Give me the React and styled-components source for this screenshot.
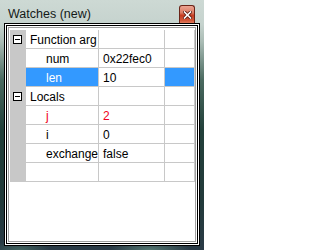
import React from "react";
import styled, { createGlobalStyle } from "styled-components";

const Global = createGlobalStyle`
  html, body { margin: 0; padding: 0; background: #fff; }
  body { font-family: "Liberation Sans", Arial, sans-serif; }
`;

const Window = styled.div`
  width: 204px;
  height: 250px;
  box-sizing: border-box;
  display: flex;
  flex-direction: column;
  background:
    radial-gradient(ellipse 40px 10px at 150px 250px, rgba(120, 170, 150, 0.55), transparent),
    radial-gradient(ellipse 30px 10px at 20px 250px, rgba(90, 140, 120, 0.5), transparent),
    linear-gradient(180deg, #cdd9d4 0px, #c6d3ce 24px, #a9bbb4 42px, #4a6a60 80px, #22403a 130px, #223a3a 200px, #2a3a46 250px);
  font-family: "Liberation Sans", Arial, sans-serif;
`;

const TitleBar = styled.div`
  height: 23px;
  flex: none;
  display: flex;
  align-items: flex-start;
  justify-content: space-between;
  padding: 0 9px 0 8px;
`;

const Title = styled.div`
  padding-top: 7px;
  font-size: 12.5px;
  line-height: 14px;
  color: #141a18;
  white-space: nowrap;
`;

const CloseButton = styled.div`
  margin-top: 5px;
  width: 16px;
  height: 18px;
  box-sizing: border-box;
  border: 1px solid #6a2418;
  border-bottom: none;
  border-radius: 3px 3px 0 0;
  background: linear-gradient(180deg, #eba392 0%, #dc7c64 40%, #c63d22 55%, #d2583a 85%, #e07a5c 100%);
  display: flex;
  align-items: center;
  justify-content: center;
`;

const Body = styled.div`
  flex: 1;
  margin: 0 4px 4px 4px;
  border: 1px solid #000;
  padding: 1px;
  background: #fff;
  display: flex;
`;

const InnerFrame = styled.div`
  flex: 1;
  border: 1px solid #000;
  padding: 1px;
  background: #fff;
  display: flex;
`;

const Content = styled.div`
  flex: 1;
  border: 1px solid #a0a0a0;
  background: #fff;
  padding: 2px 0 0 1px;
`;

const Row = styled.div`
  display: grid;
  grid-template-columns: 16px 73px 66px 30px;
  height: 19px;
`;

const Gutter = styled.div`
  background: #c8c8c8;
  display: flex;
  justify-content: center;
  align-items: flex-start;
  padding-top: 5px;
  padding-right: 1px;
  box-sizing: border-box;
`;

const Expander = styled.div`
  width: 9px;
  height: 9px;
  box-sizing: border-box;
  border: 1px solid #000;
  background: #fff;
  display: flex;
  align-items: center;
  justify-content: center;
`;

const Minus = styled.div`
  width: 5px;
  height: 1px;
  background: #000;
`;

const Cell = styled.div`
  box-sizing: border-box;
  height: 19px;
  border-right: 1px solid #c8c8c8;
  border-bottom: 1px solid #c8c8c8;
  padding: 1px 0 0 ${(p) => p.$indent || 4}px;
  line-height: 18px;
  font-size: 12px;
  white-space: nowrap;
  overflow: hidden;
  color: ${(p) => (p.$selected ? "#fff" : p.$changed ? "#f00020" : "#000")};
  background: ${(p) => (p.$selected ? "#3399ff" : "#fff")};
`;

const rows = [
  { group: true, name: "Function arg" },
  { name: "num", value: "0x22fec0" },
  { name: "len", value: "10", selected: true },
  { group: true, name: "Locals" },
  { name: "j", value: "2", changed: true },
  { name: "i", value: "0" },
  { name: "exchange", value: "false" },
  { name: "" , value: "" },
];

function CloseGlyph() {
  return (
    <svg width="9" height="8" viewBox="0 0 9 8">
      <path d="M1.5 1 L7.5 7 M7.5 1 L1.5 7" stroke="#5a1a10" strokeWidth="3.2" strokeLinecap="square" />
      <path d="M1.5 1 L7.5 7 M7.5 1 L1.5 7" stroke="#ffffff" strokeWidth="1.6" strokeLinecap="square" />
    </svg>
  );
}

export default function App() {
  return (
    <>
      <Global />
      <Window>
        <TitleBar>
          <Title>Watches (new)</Title>
          <CloseButton>
            <CloseGlyph />
          </CloseButton>
        </TitleBar>
        <Body>
          <InnerFrame>
            <Content>
              {rows.map((r, i) => (
                <Row key={i}>
                  <Gutter>
                    {r.group && (
                      <Expander>
                        <Minus />
                      </Expander>
                    )}
                  </Gutter>
                  <Cell $indent={r.group ? 4 : 20} $selected={r.selected} $changed={r.changed}>
                    {r.name}
                  </Cell>
                  <Cell $changed={r.changed}>{r.value}</Cell>
                  <Cell $selected={r.selected} />
                </Row>
              ))}
            </Content>
          </InnerFrame>
        </Body>
      </Window>
    </>
  );
}
